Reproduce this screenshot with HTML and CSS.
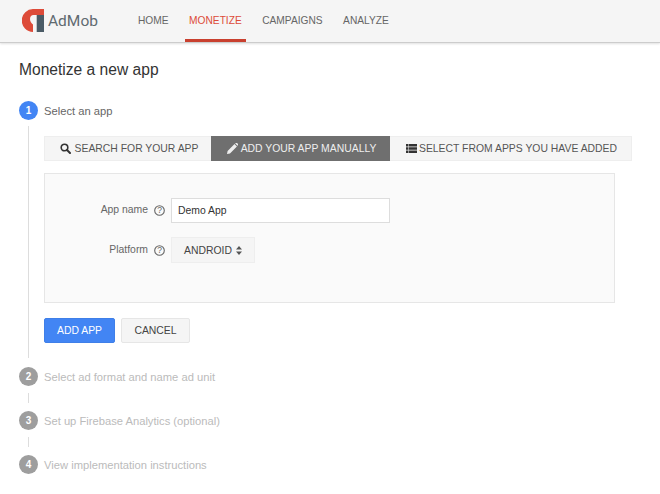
FILE: index.html
```html
<!DOCTYPE html>
<html lang="en">
<head>
<meta charset="utf-8">
<title>AdMob</title>
<link rel="stylesheet" href="styles.css">
</head>
<body>
<header class="topbar">
  <div class="brand">
    <svg class="logo" width="22" height="23" viewBox="0 0 22 23"><path d="M11.500 0H22V6H11.500C9.500 6 8 7.500 8 10C8 12.500 9.500 14.500 11 15.500V23A11.500 11.500 0 0 1 11.500 0z" fill="#dd4b39"/><path d="M14.700 6H22V23H14.700z" fill="#4a5b66"/></svg>
    <span class="brand-name">AdMob</span>
  </div>
  <nav class="nav">
    <a class="nav-item">HOME</a>
    <a class="nav-item active">MONETIZE</a>
    <a class="nav-item">CAMPAIGNS</a>
    <a class="nav-item">ANALYZE</a>
  </nav>
</header>
<main class="content">
  <h1 class="title">Monetize a new app</h1>
  <section class="step">
    <div class="step-head"><span class="badge current">1</span><span class="step-label current">Select an app</span></div>
    <div class="step-body long">
      <div class="tabs">
        <div class="tab t1"><svg class="ico" width="11" height="11" viewBox="0 0 11 11"><circle cx="4.500" cy="4.500" r="3.300" fill="none" stroke="#333" stroke-width="1.600"/><path d="M7 7l3 3" stroke="#333" stroke-width="2" stroke-linecap="round"/></svg>SEARCH FOR YOUR APP</div>
        <div class="tab t2 selected"><svg class="ico" width="11" height="11" viewBox="0 0 11 11"><path d="M0 11l.6-3L7.500 1.100l2.400 2.400L3 10.400zM8.200.4l.5-.4a1 1 0 0 1 1.300 0l1 1a1 1 0 0 1 0 1.300l-.4.500z" fill="#eee"/></svg>ADD YOUR APP MANUALLY</div>
        <div class="tab t3"><svg class="ico" width="11" height="9" viewBox="0 0 11 9"><path d="M0 0h2.500v2.500H0zM3 0h8v2.500H3zM0 3.250h2.500v2.500H0zM3 3.250h8v2.500H3zM0 6.500h2.500V9H0zM3 6.500h8V9H3z" fill="#333"/></svg>SELECT FROM APPS YOU HAVE ADDED</div>
      </div>
      <div class="panel">
        <div class="field first">
          <span class="field-label">App name</span>
          <svg class="help" width="11" height="11" viewBox="0 0 11 11"><circle cx="5.500" cy="5.500" r="4.800" fill="none" stroke="#666" stroke-width="1.100"/><text x="5.500" y="8.400" class="help-q">?</text></svg>
          <input class="input" type="text" value="Demo App">
        </div>
        <div class="field">
          <span class="field-label">Platform</span>
          <svg class="help" width="11" height="11" viewBox="0 0 11 11"><circle cx="5.500" cy="5.500" r="4.800" fill="none" stroke="#666" stroke-width="1.100"/><text x="5.500" y="8.400" class="help-q">?</text></svg>
          <div class="select">ANDROID<svg class="carets" width="6" height="9" viewBox="0 0 6 9"><path d="M3 0l3 3.500H0zM3 9L0 5.500h6z" fill="#555"/></svg></div>
        </div>
      </div>
      <div class="actions">
        <button class="btn primary">ADD APP</button>
        <button class="btn">CANCEL</button>
      </div>
    </div>
  </section>
  <section class="step">
    <div class="step-head"><span class="badge">2</span><span class="step-label">Select ad format and name ad unit</span></div>
    <div class="step-body short"></div>
  </section>
  <section class="step">
    <div class="step-head"><span class="badge">3</span><span class="step-label">Set up Firebase Analytics (optional)</span></div>
    <div class="step-body short"></div>
  </section>
  <section class="step">
    <div class="step-head"><span class="badge">4</span><span class="step-label">View implementation instructions</span></div>
  </section>
</main>
</body>
</html>
```

FILE: styles.css
```css
* { box-sizing: border-box; }
html, body { margin: 0; padding: 0; }
body { width: 660px; height: 494px; overflow: hidden; background: #fff; color: #333; font-family: "Liberation Sans", Arial, sans-serif; }
.topbar { height: 43px; display: flex; background: #f5f5f5; border-bottom: 1px solid #ccc; box-shadow: 0 1px 2px rgba(0,0,0,.12); padding-left: 22px; }
.brand { display: flex; align-items: center; width: 112px; height: 42px; padding-bottom: 1px; }
.logo { display: block; }
.brand-name { font-family: Roboto, sans-serif; font-size: 15.500px; color: #5f6a70; margin-left: 4px; }
.nav { display: flex; height: 42px; }
.nav-item { display: block; height: 42px; line-height: 41px; padding: 0 4px; margin-right: 12.500px; font-size: 10.200px; color: #666; }
.nav-item.active { color: #dd4b39; border-bottom: 3px solid #c9402f; }
.content { padding: 0 19px; }
.title { margin: 0; padding-top: 17px; height: 58px; font-size: 15.600px; line-height: 20px; font-weight: 400; color: #333; }
.step-head { display: flex; align-items: center; height: 19px; }
.badge { width: 19px; height: 19px; border-radius: 50%; background: #9e9e9e; color: #fff; font-size: 10px; font-weight: 700; line-height: 19px; text-align: center; }
.badge.current { background: #4285f4; }
.step-label { margin-left: 6px; font-size: 11.200px; color: #bbb; }
.step-label.current { color: #666; }
.step-body { margin-left: 9px; border-left: 1px solid #ddd; padding-left: 15px; }
.step-body.long { margin-top: 6px; margin-bottom: 9px; padding-top: 10px; height: 232px; }
.step-body.short { margin-top: 7px; margin-bottom: 8px; height: 10px; }
.tabs { display: flex; width: 588px; height: 25px; }
.tab { display: flex; align-items: center; justify-content: center; padding-left: 2px; font-size: 10.400px; background: #f5f5f5; border: 1px solid #eee; color: #555; }
.t1 { width: 167px; border-right: 0; }
.t2 { width: 179px; }
.t3 { flex: 1; border-left: 0; }
.tab.selected { background: #6f6f6f; border-color: #6f6f6f; color: #eee; }
.ico { margin-right: 3px; flex: none; }
.t1 .ico { margin-right: 4px; }
.t3 .ico { margin-right: 2px; }
.panel { width: 571px; height: 130px; margin-top: 12px; background: #fafafa; border: 1px solid #e6e6e6; padding-top: 23px; }
.field { display: flex; align-items: center; height: 26px; }
.field + .field { margin-top: 14px; }
.field-label { width: 103px; padding-bottom: 2px; text-align: right; font-size: 10.400px; color: #666; }
.help { margin-left: 6px; flex: none; }
.help-q { font-family: "Liberation Sans", sans-serif; font-size: 8.500px; text-anchor: middle; fill: #666; }
.input { margin-left: 6px; width: 219px; height: 25px; padding: 0 6px; border: 1px solid #ddd; background: #fff; font: 10.400px "Liberation Sans", sans-serif; color: #333; }
.select { margin-left: 6px; width: 84px; height: 26px; display: flex; align-items: center; justify-content: center; background: #f5f5f5; border: 1px solid #eee; font-size: 10.400px; color: #444; }
.carets { margin-left: 4px; }
.actions { display: flex; gap: 6px; margin-top: 15px; }
.btn { height: 25px; padding: 0; width: 69px; border: 1px solid #e6e6e6; border-radius: 2px; background: #f5f5f5; font: 10.400px "Liberation Sans", sans-serif; color: #444; }
.btn.primary { width: 71px; background: #4285f4; border-color: #3f7fe8; color: #fff; }
```
